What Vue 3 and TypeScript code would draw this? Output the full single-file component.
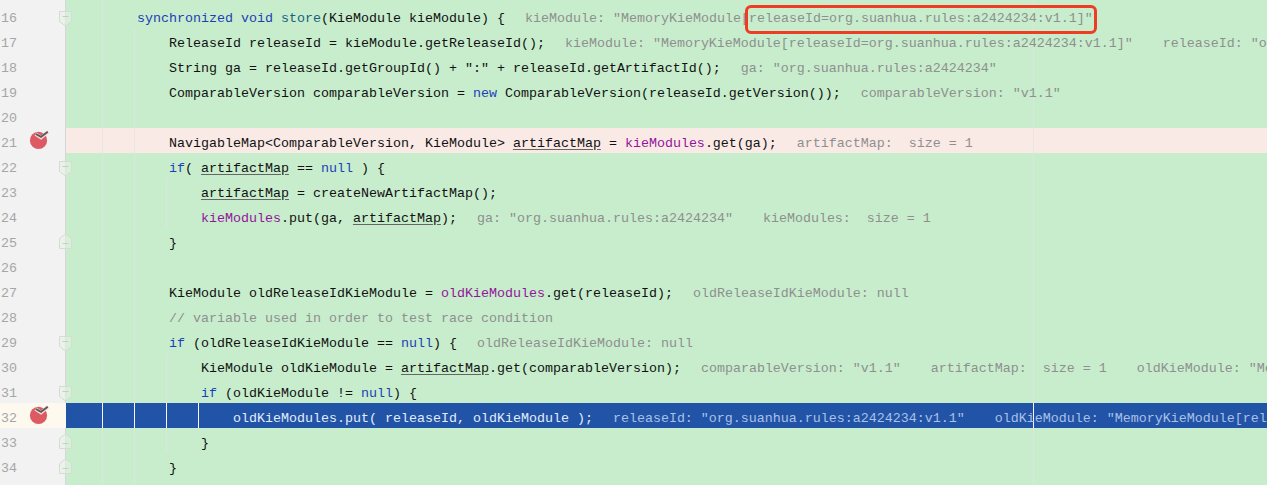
<script setup lang="ts">
type Kind = 'plain' | 'key' | 'method' | 'field' | 'reassigned' | 'comment'
interface Token { text: string; kind: Kind }

const kinds: Record<string, Kind> = { k: 'key', m: 'method', f: 'field', u: 'reassigned', c: 'comment' }

// Source markup: {k|text} marks a token of a given kind; the rest is plain.
function tokenize(src: string): Token[] {
  const out: Token[] = []
  const re = /\{([kmfuc])\|([^}]*)\}/g
  let last = 0
  let match: RegExpExecArray | null
  while ((match = re.exec(src))) {
    if (match.index > last) out.push({ text: src.slice(last, match.index), kind: 'plain' })
    out.push({ text: match[2], kind: kinds[match[1]] })
    last = match.index + match[0].length
  }
  if (last < src.length) out.push({ text: src.slice(last), kind: 'plain' })
  return out
}

const memory = 'kieModule: "MemoryKieModule[releaseId=org.suanhua.rules:a2424234:v1.1]"'
const gaHint = 'ga: "org.suanhua.rules:a2424234"'

const source: { n: number; code: string; hints?: string[]; fold?: 'open' | 'close'; state?: 'break' | 'current' }[] = [
  { n: 15, code: '' },
  { n: 16, code: '        {k|synchronized} {k|void} {m|store}(KieModule kieModule) {', hints: [memory], fold: 'open' },
  { n: 17, code: '            ReleaseId releaseId = kieModule.getReleaseId();', hints: [memory, 'releaseId: "org.suanhua.rules:a2424234:v1.1"'] },
  { n: 18, code: '            String ga = releaseId.getGroupId() + ":" + releaseId.getArtifactId();', hints: [gaHint] },
  { n: 19, code: '            ComparableVersion comparableVersion = {k|new} ComparableVersion(releaseId.getVersion());', hints: ['comparableVersion: "v1.1"'] },
  { n: 20, code: '' },
  { n: 21, code: '            NavigableMap<ComparableVersion, KieModule> {u|artifactMap} = {f|kieModules}.get(ga);', hints: ['artifactMap:  size = 1'], state: 'break' },
  { n: 22, code: '            {k|if}( {u|artifactMap} == {k|null} ) {', fold: 'open' },
  { n: 23, code: '                {u|artifactMap} = createNewArtifactMap();' },
  { n: 24, code: '                {f|kieModules}.put(ga, {u|artifactMap});', hints: [gaHint, 'kieModules:  size = 1'] },
  { n: 25, code: '            }', fold: 'close' },
  { n: 26, code: '' },
  { n: 27, code: '            KieModule oldReleaseIdKieModule = {f|oldKieModules}.get(releaseId);', hints: ['oldReleaseIdKieModule: null'] },
  { n: 28, code: '            {c|// variable used in order to test race condition}' },
  { n: 29, code: '            {k|if} (oldReleaseIdKieModule == {k|null}) {', hints: ['oldReleaseIdKieModule: null'], fold: 'open' },
  { n: 30, code: '                KieModule oldKieModule = {u|artifactMap}.get(comparableVersion);', hints: ['comparableVersion: "v1.1"', 'artifactMap:  size = 1', 'oldKieModule: "MemoryKieModule[releaseId=org.suanhua.rules:a2424234:v1.1]"'] },
  { n: 31, code: '                {k|if} (oldKieModule != {k|null}) {', fold: 'open' },
  { n: 32, code: '                    oldKieModules.put( releaseId, oldKieModule );', hints: ['releaseId: "org.suanhua.rules:a2424234:v1.1"', 'oldKieModule: "MemoryKieModule[releaseId=org.suanhua.rules:a2424234:v1.1]"'], state: 'current' },
  { n: 33, code: '                }', fold: 'close' },
  { n: 34, code: '            }', fold: 'close' },
  { n: 35, code: '' },
]

function guidesFor(n: number): number[] {
  const xs = [36, 967]
  if (n >= 17) xs.push(68)
  if (n === 23 || n === 24 || (n >= 30 && n <= 33)) xs.push(100)
  if (n === 32) xs.push(132)
  return xs
}

const rows = source.map((row) => ({
  ...row,
  label: row.n >= 16 && row.n <= 34 ? String(row.n) : '',
  tokens: tokenize(row.code),
  guides: guidesFor(row.n),
}))
</script>

<template>
  <div class="editor">
    <div
      v-for="row in rows"
      :key="row.n"
      class="line"
      :class="row.state"
    >
      <div class="gutter">
        <span class="number">{{ row.label }}</span>
        <svg v-if="row.state" class="breakpoint" width="20" height="20" viewBox="0 0 20 20">
          <circle cx="9.5" cy="10.4" r="8.6" fill="#dd5a63" />
          <path d="M6.5 4 L12 7.6 L19 1.8" fill="none" stroke="#f6dcdc" stroke-width="3.6" />
          <path d="M6.8 4 L12 6.8 L18.8 1.8" fill="none" stroke="#5a5a5a" stroke-width="1.9" />
        </svg>
      </div>
      <div class="code">
        <span v-for="x in row.guides" :key="x" class="guide" :style="{ left: x + 'px' }"></span>
        <span class="source"><span v-for="(t, i) in row.tokens" :key="i" :class="t.kind">{{ t.text }}</span></span>
        <span v-for="(h, i) in row.hints" :key="i" class="hint">{{ h }}</span>
      </div>
      <svg v-if="row.fold" class="fold" :class="row.fold" width="15" height="16" viewBox="0 0 15 16">
        <path
          v-if="row.fold === 'open'"
          d="M1.5 .5 H13.5 V10.5 L7.5 15 L1.5 10.5 Z"
          fill="#e6f2e4"
          fill-opacity=".55"
          stroke="#d4dcd4"
        />
        <path
          v-else
          d="M1.5 15.5 H13.5 V5.5 L7.5 1 L1.5 5.5 Z"
          fill="#e6f2e4"
          fill-opacity=".55"
          stroke="#d4dcd4"
        />
        <path :d="row.fold === 'open' ? 'M4.5 5.5 H10.5' : 'M4.5 10.5 H10.5'" stroke="#c4cfc4" />
      </svg>
    </div>
    <div class="callout"></div>
  </div>
</template>

<style>
html,
body {
  margin: 0;
  background: #c7edcc;
}
</style>

<style scoped>
.editor {
  position: relative;
  width: 1267px;
  height: 485px;
  overflow: hidden;
  background: #c7edcc;
  font-family: "Liberation Mono", "DejaVu Sans Mono", monospace;
  font-size: 13.33px;
  color: #111;
}

.line {
  position: relative;
  display: flex;
  height: 25px;
  line-height: 25px;
  white-space: pre;
}

.line:first-child {
  margin-top: -22px;
}

.gutter {
  box-sizing: border-box;
  display: flex;
  flex: none;
  width: 66px;
  height: 25px;
  padding-left: 1px;
  background: #f2f2f2;
  border-right: 1px solid #d6d6d6;
}

.number {
  width: 28px;
  padding-top: 3px;
  color: #a6a6a6;
}

.breakpoint {
  margin-top: 2px;
}

.code {
  position: relative;
  flex: 1;
  min-width: 0;
  box-sizing: border-box;
  height: 25px;
  padding: 3px 0 0 7px;
  overflow: hidden;
}

.guide {
  position: absolute;
  top: 0;
  bottom: 0;
  width: 1px;
  background: #dde6dd;
}

.source,
.hint {
  position: relative;
}

.hint {
  margin-left: 30px;
  color: #8f8f8f;
}

.source + .hint {
  margin-left: 20px;
}

.key {
  color: #1c3fb8;
}

.method {
  color: #17637e;
}

.field {
  color: #93159b;
}

.reassigned {
  text-decoration: underline;
  text-decoration-color: #666;
  text-underline-offset: 2px;
}

.comment {
  color: #8f8f8f;
}

.break .code {
  background: #faeae6;
}

.break .guide {
  background: #ece4e2;
}

.current .gutter {
  background: #fdf9ee;
  border-right: none;
}

.current .code {
  background: #2154a6;
  color: #e4ecfa;
}

.current .guide {
  background: #f4f6fb;
}

.current .hint {
  color: #acc0e6;
}

.fold {
  position: absolute;
  left: 58px;
}

.fold.open {
  top: 8px;
}

.fold.close {
  top: 5px;
}

.callout {
  position: absolute;
  left: 745px;
  top: 5px;
  box-sizing: border-box;
  width: 352px;
  height: 29px;
  border: 3px solid #ee3d23;
  border-radius: 6px;
}
</style>
